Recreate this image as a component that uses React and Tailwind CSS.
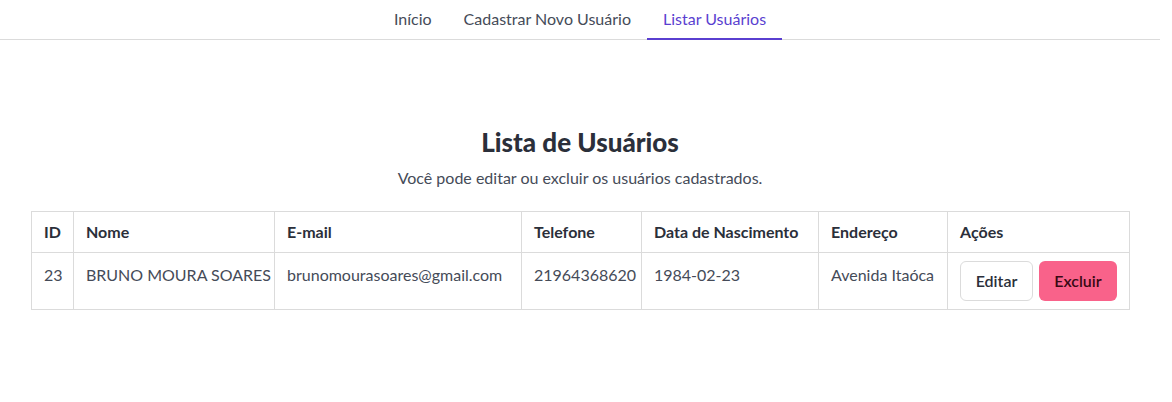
import React from 'react';

const tabs = [
  { label: 'Início', active: false },
  { label: 'Cadastrar Novo Usuário', active: false },
  { label: 'Listar Usuários', active: true },
];

const columns = [
  { label: 'ID', w: 'w-[42px]' },
  { label: 'Nome', w: 'w-[201px]' },
  { label: 'E-mail', w: 'w-[247px]' },
  { label: 'Telefone', w: 'w-[120px]' },
  { label: 'Data de Nascimento', w: 'w-[177px]' },
  { label: 'Endereço', w: 'w-[129px]' },
  { label: 'Ações', w: 'w-[182px]' },
];

const users = [
  {
    id: 23,
    nome: 'BRUNO MOURA SOARES',
    email: 'brunomourasoares@gmail.com',
    telefone: '21964368620',
    nascimento: '1984-02-23',
    endereco: 'Avenida Itaóca',
  },
];

const cell = 'border border-[#dbdbdb] px-3 pt-[10px] pb-2 leading-6 align-top whitespace-nowrap';

const App = () => {
  return (
    <div className="w-[1160px] min-h-[402px] bg-white text-[#454b58] font-['Lato','Open_Sans',sans-serif] text-[16px]">
      <nav className="flex justify-center border-b border-[#dbdbdb]">
        {tabs.map((tab) => (
          <a
            key={tab.label}
            href="#"
            className={
              tab.active
                ? 'px-4 pt-[7px] pb-[7px] leading-6 -mb-px border-b-2 border-[#5a3fd0] text-[#5a3fd0]'
                : 'px-4 pt-[7px] pb-[8px] leading-6 text-[#454b58]'
            }
          >
            {tab.label}
          </a>
        ))}
      </nav>

      <main className="px-[31px] pt-[87px]">
        <h1 className="text-center text-[26px] leading-[30px] font-black text-[#2b2f3a]">
          Lista de Usuários
        </h1>
        <p className="text-center mt-[9px] leading-6">
          Você pode editar ou excluir os usuários cadastrados.
        </p>

        <table className="mt-[21px] w-[1098px] table-fixed border-collapse border border-[#dbdbdb]">
          <thead>
            <tr>
              {columns.map((c) => (
                <th
                  key={c.label}
                  className={`${c.w} border border-[#dbdbdb] px-3 py-2 leading-6 text-left font-bold text-[#2b2f3a] whitespace-nowrap`}
                >
                  {c.label}
                </th>
              ))}
            </tr>
          </thead>
          <tbody>
            {users.map((u) => (
              <tr key={u.id}>
                <td className={cell}>{u.id}</td>
                <td className={cell}>{u.nome}</td>
                <td className={cell}>{u.email}</td>
                <td className={cell}>{u.telefone}</td>
                <td className={cell}>{u.nascimento}</td>
                <td className={cell}>{u.endereco}</td>
                <td className="border border-[#dbdbdb] px-3 py-2 align-top">
                  <div className="flex gap-[6px]">
                    <button className="h-10 w-[73px] rounded-md border border-[#dbdbdb] bg-white font-semibold text-[#2b2f3a]">
                      Editar
                    </button>
                    <button className="h-10 w-[78px] rounded-md bg-[#f9628a] font-semibold text-[#3a0914]">
                      Excluir
                    </button>
                  </div>
                </td>
              </tr>
            ))}
          </tbody>
        </table>
      </main>
    </div>
  );
};

export default App;
